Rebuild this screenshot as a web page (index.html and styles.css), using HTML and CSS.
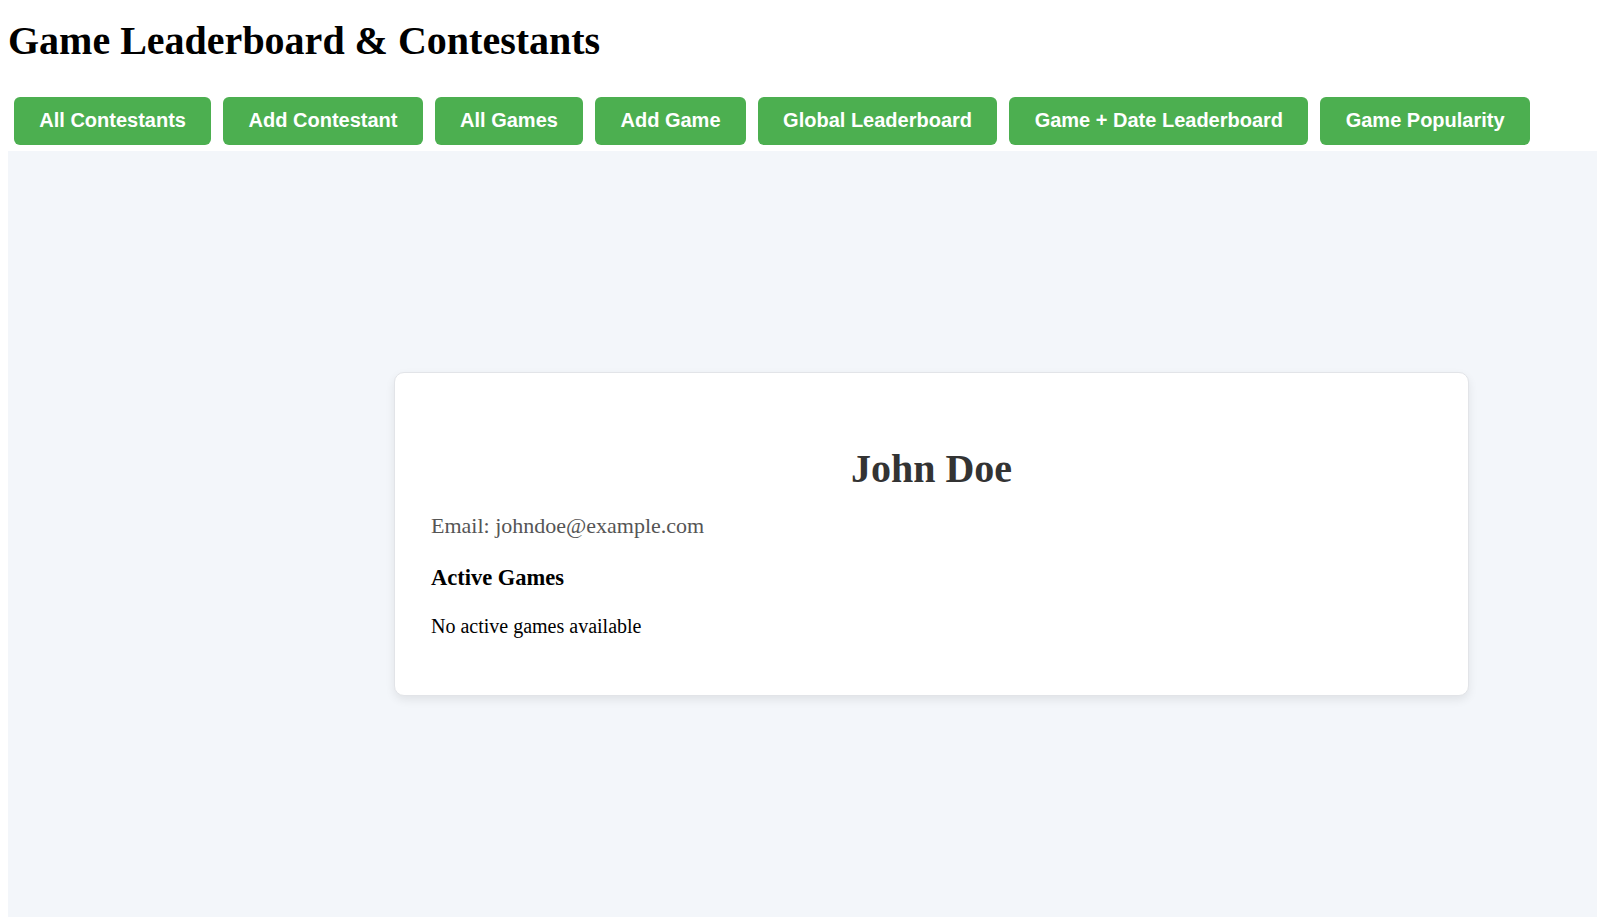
FILE: index.html
```html
<!DOCTYPE html>
<html lang="en">
<head>
<meta charset="utf-8">
<title>Game Leaderboard &amp; Contestants</title>
<link rel="stylesheet" href="styles.css">
</head>
<body>
<h1 class="page-title">Game Leaderboard &amp; Contestants</h1>
<nav class="nav">
  <button class="nav-btn">All Contestants</button>
  <button class="nav-btn">Add Contestant</button>
  <button class="nav-btn">All Games</button>
  <button class="nav-btn">Add Game</button>
  <button class="nav-btn">Global Leaderboard</button>
  <button class="nav-btn">Game + Date Leaderboard</button>
  <button class="nav-btn">Game Popularity</button>
</nav>
<main class="panel">
  <section class="card">
    <h2 class="card-name">John Doe</h2>
    <p class="card-email">Email: johndoe@example.com</p>
    <h3 class="card-sub">Active Games</h3>
    <p class="card-empty">No active games available</p>
  </section>
</main>
</body>
</html>
```
FILE: styles.css
```css
html {
  background: #ffffff;
}
body {
  margin: 8px 8px 0;
  font-family: "Liberation Serif", "Times New Roman", serif;
  color: #000;
}
.page-title {
  font-size: 40px;
  font-weight: bold;
  line-height: normal;
  margin: 8.5px 0 0;
}
.nav {
  display: flex;
  gap: 12px;
  padding: 33px 6px 6px;
}
.nav-btn {
  background: #4caf50;
  color: #fff;
  border: none;
  border-radius: 6px;
  font-family: "Liberation Sans", Arial, sans-serif;
  font-size: 20px;
  font-weight: bold;
  line-height: 23px;
  padding: 12.5px 25.3px;
  margin: 0;
}
.panel {
  box-sizing: border-box;
  width: calc(100vw - 8px);
  background: #f3f6fa;
  height: 766px;
  display: flex;
  align-items: center;
  padding-left: 386px;
}
.card {
  box-sizing: border-box;
  width: 1075px;
  flex: none;
  background: #fff;
  border: 1px solid #e2e4e8;
  border-radius: 10px;
  box-shadow: 0 4px 10px rgba(0, 0, 0, 0.08);
  padding: 36px;
  display: flex;
  flex-direction: column;
}
.card-name {
  font-size: 40px;
  font-weight: bold;
  color: #333;
  text-align: center;
  line-height: normal;
  margin: 36px 0 0;
}
.card-email {
  font-size: 22px;
  color: #555;
  line-height: normal;
  margin: 21.5px 0 0;
}
.card-sub {
  font-size: 22.5px;
  font-weight: bold;
  line-height: normal;
  margin: 26px 0 0;
}
.card-empty {
  font-size: 20px;
  line-height: normal;
  margin: 23.5px 0 21px;
}
```
